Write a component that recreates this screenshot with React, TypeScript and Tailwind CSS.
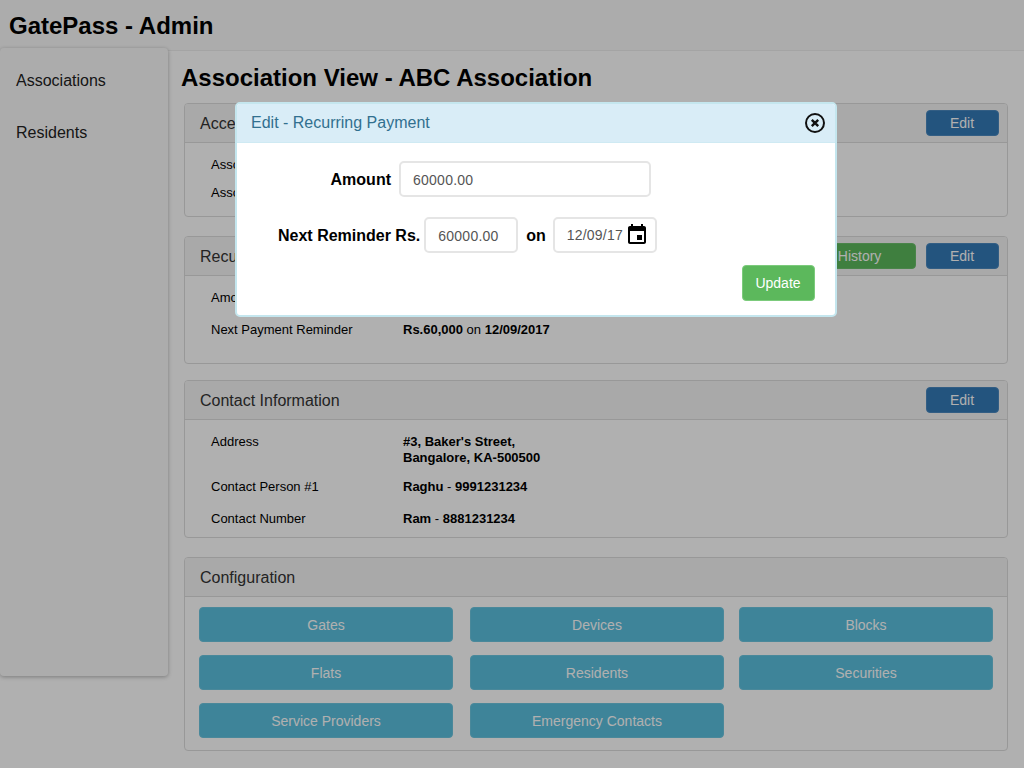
import React from 'react';

const Row = ({ label, children, className = '' }: { label: string; children: React.ReactNode; className?: string }) => (
  <div className={`flex text-[13px] leading-[16px] text-black ${className}`}>
    <div className="w-[192px] shrink-0">{label}</div>
    <div>{children}</div>
  </div>
);

const Panel = ({ title, actions, className = '', children }: { title: string; actions?: React.ReactNode; className?: string; children: React.ReactNode }) => (
  <section className={`ml-[3px] w-[824px] rounded-[4px] border border-[#ddd] bg-white ${className}`}>
    <div className="flex h-[39px] items-center justify-between rounded-t-[3px] border-b border-[#ddd] bg-[#f5f5f5] pl-[15px] pr-[8px]">
      <h3 className="pt-[2px] text-[16px] text-[#333]">{title}</h3>
      <div className="flex gap-[10px]">{actions}</div>
    </div>
    {children}
  </section>
);

const EditButton = () => (
  <button className="h-[26px] w-[73px] rounded-[4px] border border-[#4a89c0] bg-[#337ab7] pr-[1px] text-[14px] text-white">Edit</button>
);

const ConfigButton = ({ label }: { label: string }) => (
  <button className="h-[35px] w-[254px] rounded-[4px] border border-[#6cc6e0] bg-[#5bc0de] pt-[2px] text-[14px] text-white">{label}</button>
);

const App = () => {
  return (
    <div className="relative h-screen overflow-hidden bg-white font-['Liberation_Sans',Arial,sans-serif]">
      {/* Top bar */}
      <header className="flex h-[51px] items-center border-b border-[#eee] bg-[#fafafa] pl-[9px]">
        <h1 className="pt-[2px] text-[24px] font-bold text-black">GatePass - Admin</h1>
      </header>

      <div className="flex">
        {/* Sidebar */}
        <nav className="relative mt-[-3px] h-[628px] w-[168px] shrink-0 rounded-[4px] bg-[#fafafa] pl-[16px] pt-[22px] text-[16px] text-[#222] shadow-[0_1px_4px_rgba(0,0,0,0.3)]">
          <div className="leading-[22px]">Associations</div>
          <div className="mt-[30px] leading-[22px]">Residents</div>
        </nav>

        {/* Main content */}
        <main className="pl-[13px]">
          <h2 className="mt-[13px] text-[24px] font-bold leading-[28px] text-black">Association View - ABC Association</h2>

          <Panel title="Access Information" className="mt-[11px] h-[114px]" actions={<EditButton />}>
            <div className="pl-[26px] pt-[14px]">
              <Row label="Association ID">ABC001</Row>
              <Row label="Association Name" className="mt-[12px]">ABC Association</Row>
            </div>
          </Panel>

          <Panel
            title="Recurring Payment"
            className="mt-[19px] h-[128px]"
            actions={
              <>
                <button className="h-[26px] w-[172px] rounded-[4px] border border-[#6cc06c] bg-[#5cb85c] text-[14px] text-white">Payment History</button>
                <EditButton />
              </>
            }
          >
            <div className="pl-[26px] pt-[14px]">
              <Row label="Amount"><b>Rs.60,000</b></Row>
              <Row label="Next Payment Reminder" className="mt-[16px]">
                <b>Rs.60,000</b> on <b>12/09/2017</b>
              </Row>
            </div>
          </Panel>

          <Panel title="Contact Information" className="mt-[16px] h-[158px]" actions={<EditButton />}>
            <div className="pl-[26px] pt-[14px]">
              <Row label="Address">
                <b>#3, Baker's Street,<br />Bangalore, KA-500500</b>
              </Row>
              <Row label="Contact Person #1" className="mt-[13px]"><b>Raghu</b> - <b>9991231234</b></Row>
              <Row label="Contact Number" className="mt-[16px]"><b>Ram</b> - <b>8881231234</b></Row>
            </div>
          </Panel>

          <Panel title="Configuration" className="mt-[19px] h-[194px]">
            <div className="grid grid-cols-[271px_269px_254px] gap-y-[13px] pl-[14px] pt-[10px]">
              <ConfigButton label="Gates" />
              <ConfigButton label="Devices" />
              <ConfigButton label="Blocks" />
              <ConfigButton label="Flats" />
              <ConfigButton label="Residents" />
              <ConfigButton label="Securities" />
              <ConfigButton label="Service Providers" />
              <ConfigButton label="Emergency Contacts" />
            </div>
          </Panel>
        </main>
      </div>

      {/* Backdrop + modal */}
      <div className="absolute inset-0 bg-black/[0.31] pl-[235px] pt-[102px]">
        <div className="h-[215px] w-[602px] overflow-hidden rounded-[5px] border-2 border-[#c4e6ee] bg-white">
          <div className="flex h-[39px] items-center justify-between border-b border-[#cfeaf3] bg-[#d9edf7] pl-[14px] pr-[10px]">
            <span className="text-[16px] text-[#31708f]">Edit - Recurring Payment</span>
            <svg width="20" height="20" viewBox="0 0 20 20" fill="none" stroke="#111" aria-hidden="true">
              <circle cx="10" cy="10" r="9" strokeWidth="2" />
              <path d="M6.8 6.8l6.4 6.4M13.2 6.8l-6.4 6.4" strokeWidth="2.4" />
            </svg>
          </div>

          <div className="mt-[18px] flex items-center">
            <label className="w-[154px] pt-[2px] text-right text-[16px] font-bold text-black">Amount</label>
            <input
              readOnly
              value="60000.00"
              className="ml-[8px] h-[36px] w-[252px] rounded-[5px] border-2 border-[#e5e5e5] pl-[12px] pt-[1px] text-[14px] tracking-[0.25px] text-[#555] outline-none"
            />
          </div>

          <div className="mt-[20px] flex items-center">
            <label className="ml-[41px] whitespace-nowrap pt-[2px] text-[16px] font-bold text-black">Next Reminder Rs.</label>
            <input
              readOnly
              value="60000.00"
              className="ml-[4px] h-[36px] w-[94px] rounded-[5px] border-2 border-[#e5e5e5] pl-[12px] pt-[1px] text-[14px] tracking-[0.25px] text-[#555] outline-none"
            />
            <span className="ml-[8px] pt-[2px] text-[16px] font-bold text-black">on</span>
            <div className="ml-[7px] flex h-[36px] w-[104px] items-center rounded-[5px] border-2 border-[#e5e5e5] pl-[12px] text-[14px] tracking-[0.2px] text-[#555]">
              <span className="pt-[1px]">12/09/17</span>
              <svg className="ml-[2px]" width="24" height="24" viewBox="0 0 24 24" fill="#000" aria-hidden="true">
                <path d="M17 12h-5v5h5v-5zM16 1v2H8V1H6v2H5c-1.11 0-1.99.9-1.99 2L3 19c0 1.1.89 2 2 2h14c1.1 0 2-.9 2-2V5c0-1.1-.9-2-2-2h-1V1h-2zm3 18H5V8h14v11z" />
              </svg>
            </div>
          </div>

          <div className="mt-[12px] flex justify-end pr-[20px]">
            <button className="h-[36px] w-[73px] rounded-[4px] border border-[#7ccb7c] bg-[#5cb85c] pr-[1px] text-[14px] text-white">Update</button>
          </div>
        </div>
      </div>
    </div>
  );
};

export default App;
